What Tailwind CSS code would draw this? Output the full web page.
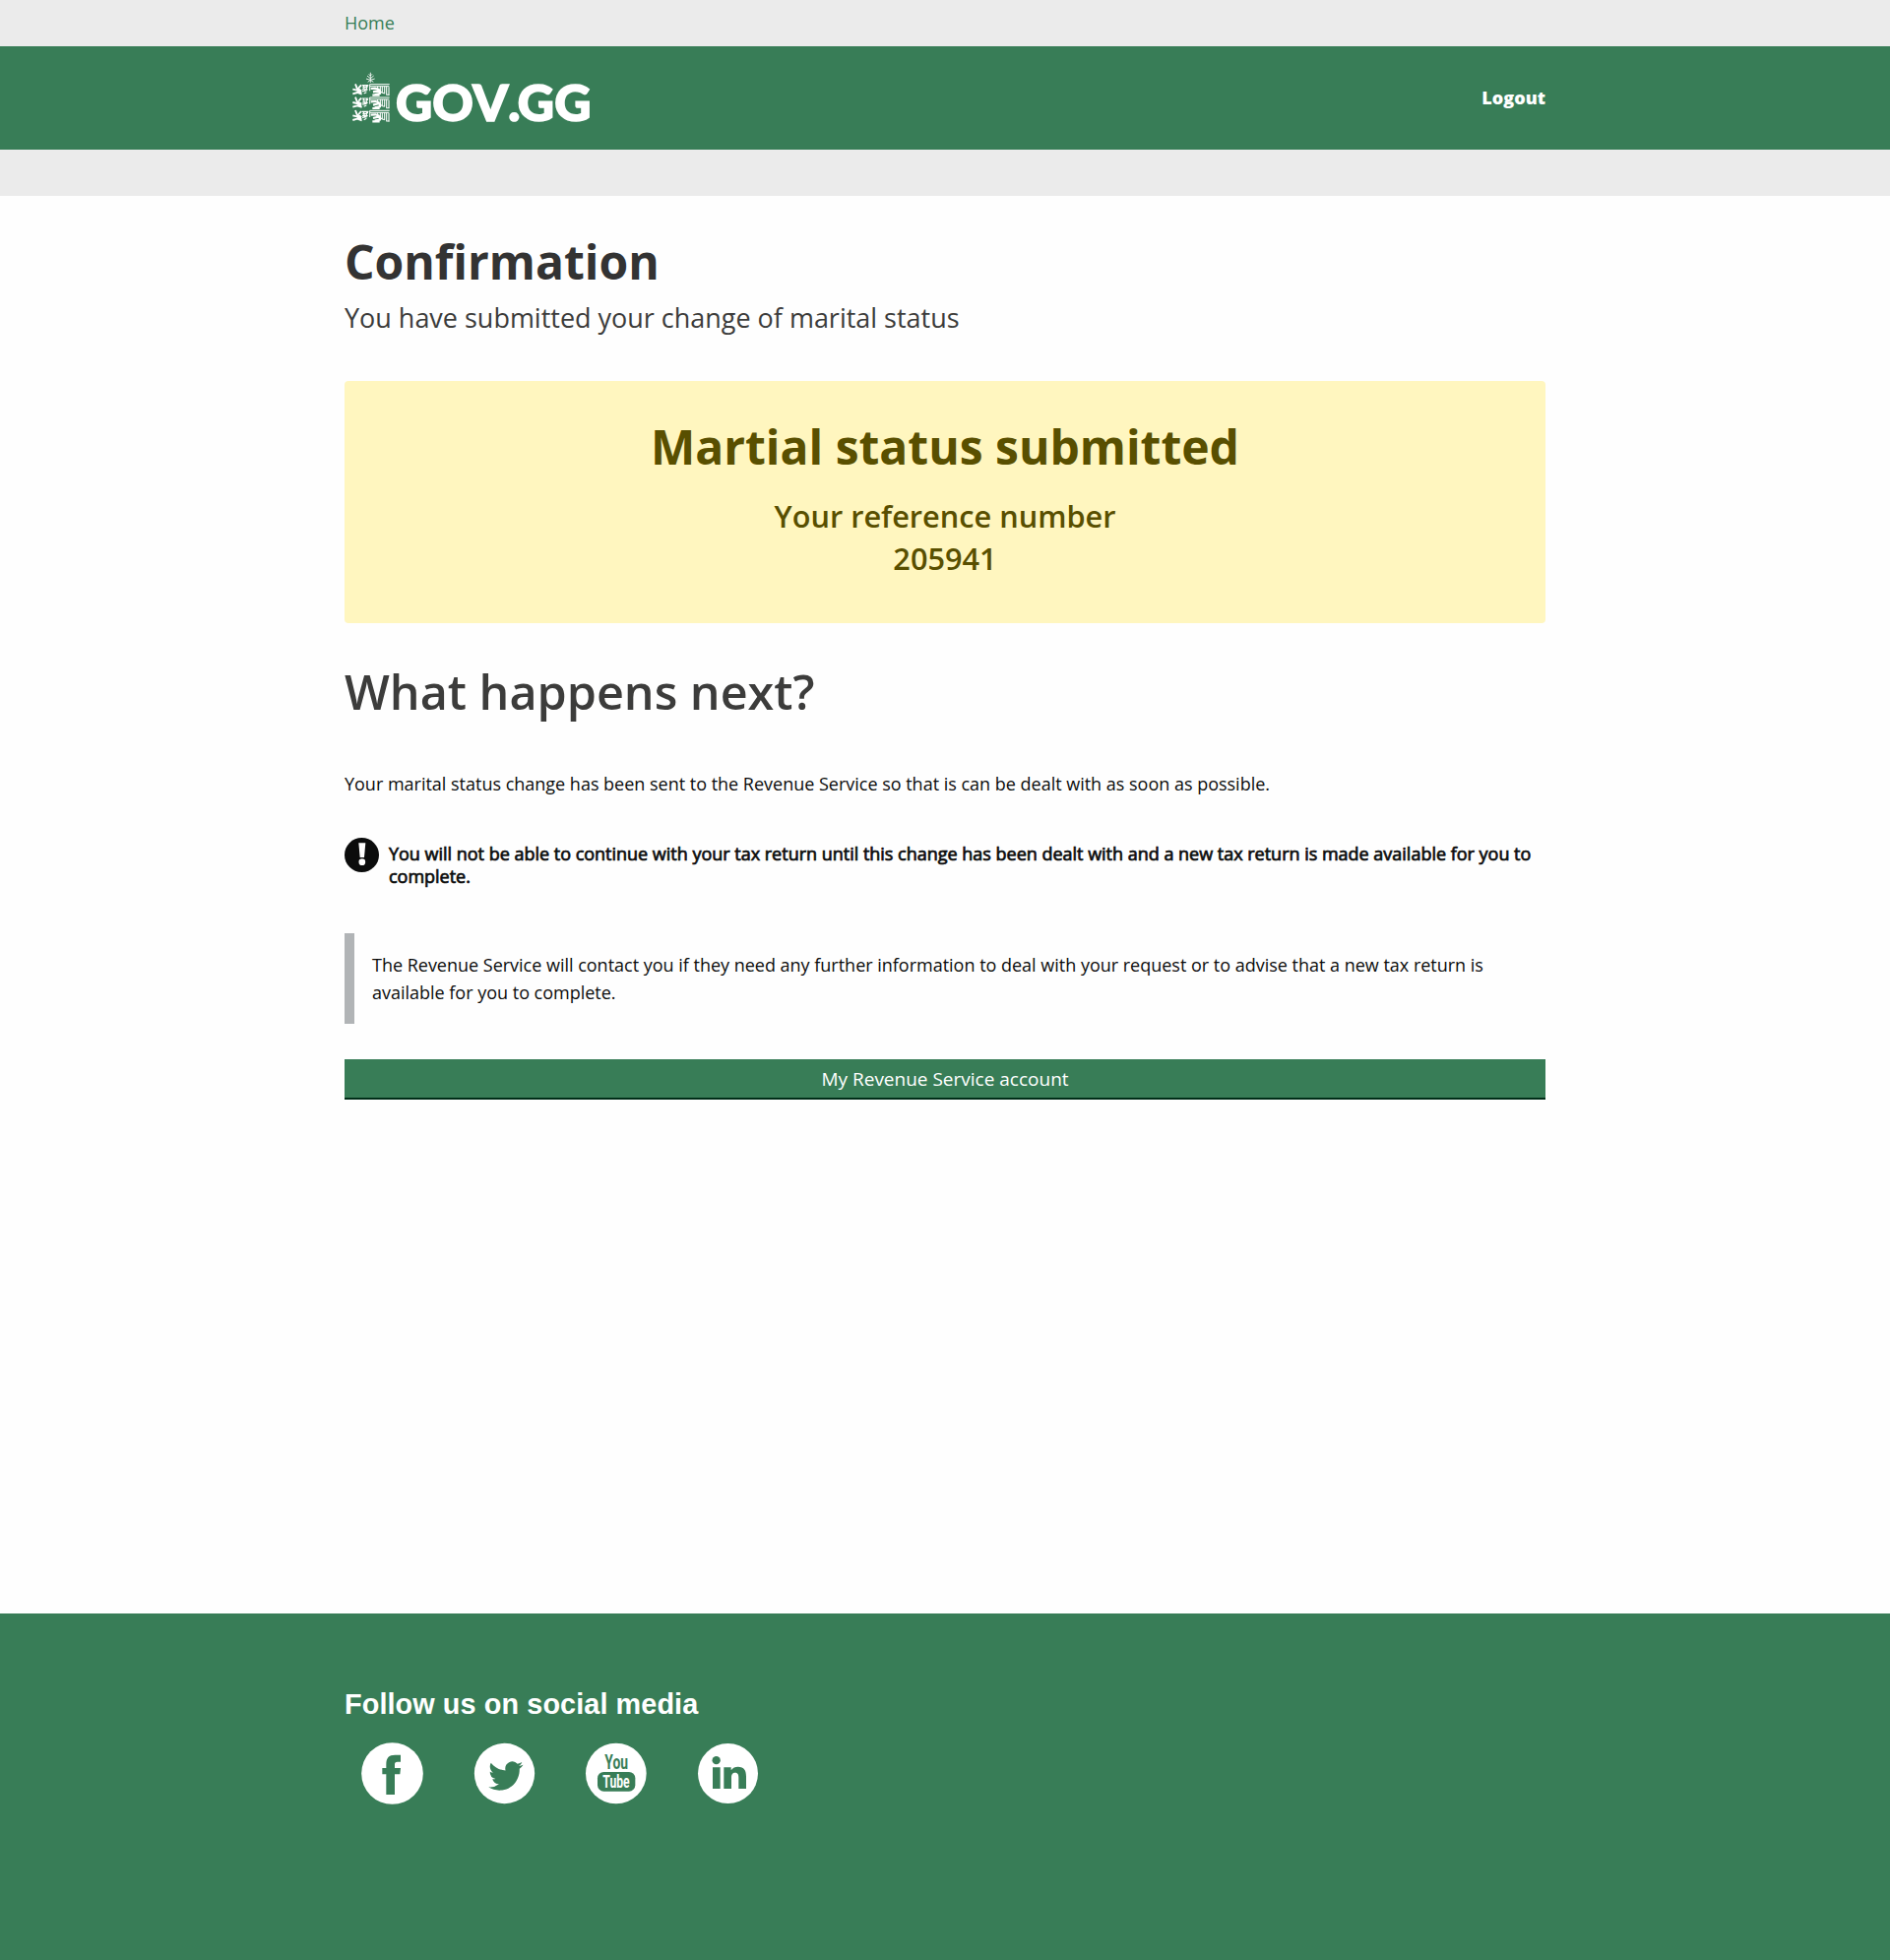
<!DOCTYPE html>
<html lang="en">
<head>
<meta charset="utf-8">
<title>Confirmation - GOV.GG</title>
<script src="https://cdn.jsdelivr.net/npm/@tailwindcss/browser@4"></script>
</head>
<body class="flex min-h-[1991px] flex-col bg-[#fefefe] font-['Open_Sans',sans-serif] text-lg text-[#0b0c0c]">

<nav class="h-[47px] bg-[#ebebeb]">
  <div class="mx-auto w-[1220px] leading-[47px]"><a href="#" class="text-[#377e57]">Home</a></div>
</nav>

<header class="h-[105px] bg-[#387d57]">
  <div class="mx-auto flex h-full w-[1220px] items-center justify-between">
    <a href="#" aria-label="GOV.GG">
      <svg class="block" width="260" height="105" viewBox="30 141 780 315" fill="#fff">
        <defs>
          <g id="lion" fill="none" stroke="#fff" stroke-width="4" stroke-linejoin="round">
            <path stroke-width="5.5" d="M8 1l5 13 14 8M26 4l-8 9M0 17l13 3 14 8M0 31l14-4 14 5"/>
            <path stroke-width="3.5" d="M28 5h20M30 11l17-2M29 17l17 1M29 23l14-2M33 6l4 18M43 5l-2 18M34 30l8-4"/>
            <path stroke-width="3" d="M52 2h60M53 8h58M52 2v20"/>
            <path stroke-width="6.5" d="M55 15l14-1 12 4M62 25l20-5 1 10-16 3M60 35h22"/>
            <path stroke-width="3.2" d="M76 8v12M84 8v16l6 4M90 8v20l8 2M97 8v22M103 8v26h9M110 10v26"/>
          </g>
        </defs>
        <path fill="none" stroke="#fff" stroke-width="2.6" d="M109 221v31M96 240l13 4 13-4M99 231l10 8 10-8M104 226l5 5 5-5M101 250l8-6 9 6"/>
        <use href="#lion" x="55" y="255"/>
        <use href="#lion" x="55" y="295"/>
        <use href="#lion" x="55" y="335"/>
        <text x="186 298 421 529 557 670" y="367.500" font-family="Lato, sans-serif" font-weight="900" font-size="154" stroke="#fff" stroke-width="5">GOV.GG</text>
      </svg>
    </a>
    <a href="#" class="pb-0.5 font-extrabold text-white">Logout</a>
  </div>
</header>
<div class="h-[47px] bg-[#ebebeb]"></div>

<main class="mx-auto w-[1220px] grow pt-[38px]">
  <h1 class="text-5xl leading-[58px] font-bold text-[#333]">Confirmation</h1>
  <p class="mt-[9px] text-[26.97px] leading-[38px] text-[#3c3c3b]">You have submitted your change of marital status</p>

  <section class="mt-[45px] h-[246px] rounded-[4px] bg-[#fff6bf] pt-[38px] text-center text-[#594f00]">
    <h2 class="text-5xl leading-[58px] font-bold">Martial status submitted</h2>
    <p class="mt-5 text-[30.7px] leading-[43px] font-semibold">Your reference number<br>205941</p>
  </section>

  <h2 class="mt-10 text-[48.5px] leading-[58px] font-semibold text-[#3c3c3b]">What happens next?</h2>
  <p class="mt-[51px] leading-7 tracking-[-0.01px]">Your marital status change has been sent to the Revenue Service so that is can be dealt with as soon as possible.</p>

  <div class="mt-[41px] flex gap-2.5">
    <svg class="shrink-0" width="35" height="35" viewBox="0 0 105 105">
      <circle cx="52.5" cy="52.5" r="52.5" fill="#0b0c0c"/>
      <path d="M43 16h21l-4 44H47z" fill="#fff"/>
      <circle cx="53.500" cy="74" r="10" fill="#fff"/>
    </svg>
    <p class="pt-[5px] leading-[23px] tracking-[-0.01px] [-webkit-text-stroke:0.7px_#0b0c0c]">You will not be able to continue with your tax return until this change has been dealt with and a new tax return is made available for you to complete.</p>
  </div>

  <div class="mt-[46px] border-l-[10px] border-[#b1b4b6] py-[18px] pr-[18px] pl-[18px] leading-7 tracking-[-0.01px]">The Revenue Service will contact you if they need any further information to deal with your request or to advise that a new tax return is available for you to complete.</div>

  <a href="#" class="mt-9 block h-[41px] border-b-2 border-[#002d18] bg-[#387d57] text-center text-[19px] leading-[41px] text-white">My Revenue Service account</a>
</main>

<footer class="h-[352px] bg-[#387d57] pt-[75px]">
  <div class="mx-auto w-[1220px]">
    <h2 class="font-['Liberation_Sans',Arial,sans-serif] text-[28.8px] leading-[34px] font-bold tracking-[0.1px] text-white">Follow us on social media</h2>
    <div class="mt-[22px] flex gap-[50.6px] pl-[17px]">
      <a href="#" aria-label="Facebook">
        <svg class="block" width="63" height="63" viewBox="21 15 189 189">
          <circle cx="115.500" cy="109.500" r="94" fill="#fff"/>
          <path fill="#387d57" d="M97 174v-62H85V93h12V82c0-20 8-29 27-29h17v21h-10c-6 0-8 3-8 8v11h18l-2 19h-16v62z"/>
        </svg>
      </a>
      <a href="#" aria-label="Twitter">
        <svg class="block" width="63" height="63" viewBox="362 15 189 189">
          <circle cx="456.500" cy="109.500" r="92" fill="#fff"/>
          <path fill="#387d57" transform="translate(408 63) scale(4.375 4.5)" d="M23.953 4.57a10 10 0 01-2.825.775 4.958 4.958 0 002.163-2.723c-.951.555-2.005.959-3.127 1.184a4.92 4.92 0 00-8.384 4.482C7.690 8.095 4.067 6.130 1.640 3.162a4.822 4.822 0 00-.666 2.475c0 1.710.87 3.213 2.188 4.096a4.904 4.904 0 01-2.228-.616v.06a4.923 4.923 0 003.946 4.827 4.996 4.996 0 01-2.212.085 4.936 4.936 0 004.604 3.417 9.867 9.867 0 01-6.102 2.105c-.39 0-.779-.023-1.170-.067a13.995 13.995 0 007.557 2.209c9.053 0 13.998-7.496 13.998-13.985 0-.21 0-.42-.015-.63A9.935 9.935 0 0024 4.590z"/>
        </svg>
      </a>
      <a href="#" aria-label="YouTube">
        <svg class="block" width="63" height="63" viewBox="27 15 189 189">
          <circle cx="122.500" cy="109.500" r="92.500" fill="#fff"/>
          <rect x="66" y="105" width="115" height="59" rx="19" fill="#387d57"/>
          <g font-family="Roboto, sans-serif" font-weight="700">
            <text x="88" y="95" font-size="59" textLength="71" lengthAdjust="spacingAndGlyphs" fill="#387d57">You</text>
            <text x="82" y="152" font-size="54" textLength="82" lengthAdjust="spacingAndGlyphs" fill="#fff">Tube</text>
          </g>
        </svg>
      </a>
      <a href="#" aria-label="LinkedIn">
        <svg class="block" width="63" height="63" viewBox="369 15 189 189">
          <circle cx="463.500" cy="109.500" r="91.500" fill="#fff"/>
          <g fill="#387d57">
            <circle cx="428" cy="69.500" r="12.500"/>
            <path d="M417 91h23v65h-23zM451 156V91h22v9c5-8 13-11 21-11 19 0 25 11 25 30v37h-23v-33c0-9-2-16-10-16-9 0-12 6-12 15v34z"/>
          </g>
        </svg>
      </a>
    </div>
  </div>
</footer>
</body>
</html>
